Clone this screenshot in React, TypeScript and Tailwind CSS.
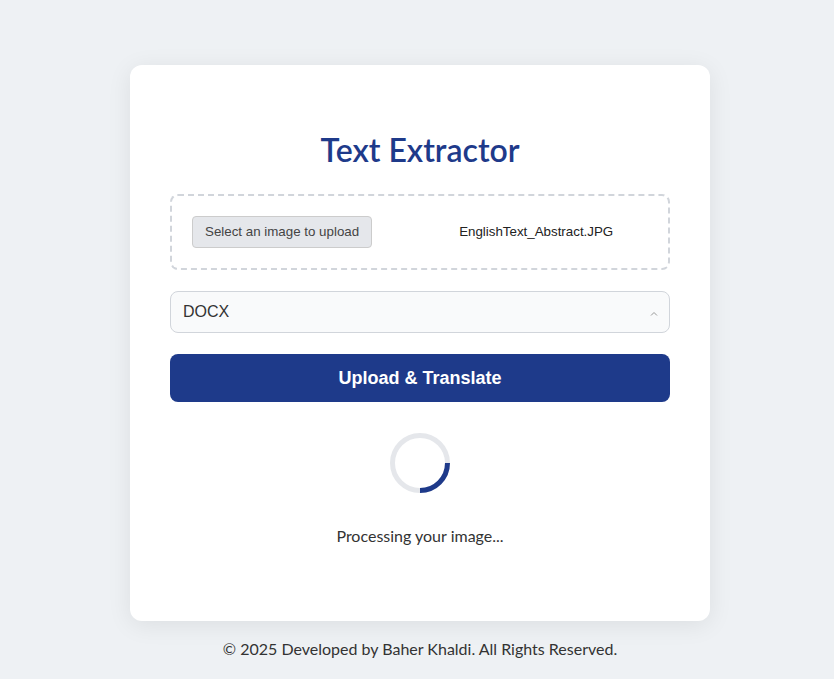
import React from "react";

const ui = { fontFamily: "Lato, 'Noto Sans', sans-serif" };
const arial = { fontFamily: "'Liberation Sans', Arial, sans-serif" };

const Spinner = () => (
  <svg width="60" height="60" viewBox="0 0 60 60">
    <circle cx="30" cy="30" r="27.5" fill="none" stroke="#e5e7eb" strokeWidth="5" />
    {/* quarter arc from 3 o'clock to 6 o'clock */}
    <path d="M57.5 30 A27.5 27.5 0 0 1 30 57.5" fill="none" stroke="#1e3a8a" strokeWidth="5" />
  </svg>
);

export default function App() {
  return (
    <div className="min-h-screen bg-[#eef1f4] flex flex-col items-center pt-[65px] pl-[6px]" style={ui}>
      <div className="w-[580px] bg-white rounded-xl shadow-[0_4px_24px_rgba(0,0,0,0.08)] px-10 pt-[66px] pb-[73px]">
        <h1 className="text-[32px] leading-[38px] font-semibold text-[#1e3a8a] text-center mb-[25px]">
          Text Extractor
        </h1>

        {/* file picker */}
        <div className="h-[76px] border-2 border-dashed border-[#d1d5db] rounded-lg flex items-center px-5" style={arial}>
          <button className="h-8 px-3 bg-[#e5e7eb] border border-[#ccc] rounded text-[13.33px] text-[#444]">
            Select an image to upload
          </button>
          <span className="ml-[87px] text-[13.33px] text-[#222]">EnglishText_Abstract.JPG</span>
        </div>

        <div
          className="mt-[21px] h-[42px] border border-[#d1d5db] rounded-lg bg-[#f9fafb] flex items-center justify-between pl-3 pr-3"
          style={arial}
        >
          <span className="text-[16px] text-[#333]">DOCX</span>
          <svg width="8" height="6" viewBox="0 0 8 6" className="-mr-[1px] mt-[4px]">
            <path d="M1 4.5 L4 1.5 L7 4.5" fill="none" stroke="#999" strokeWidth="1" />
          </svg>
        </div>

        <button
          className="mt-[21px] w-full h-12 bg-[#1e3a8a] rounded-lg text-white text-[18px] font-bold"
          style={arial}
        >
          Upload &amp; Translate
        </button>

        <div className="flex flex-col items-center mt-[31px]">
          <Spinner />
          <p className="mt-[31px] text-[16px] leading-6 text-[#333]">Processing your image...</p>
        </div>
      </div>

      <footer className="mt-4 text-[16px] leading-6 text-[#333]">
        © 2025 Developed by Baher Khaldi. All Rights Reserved.
      </footer>
    </div>
  );
}
